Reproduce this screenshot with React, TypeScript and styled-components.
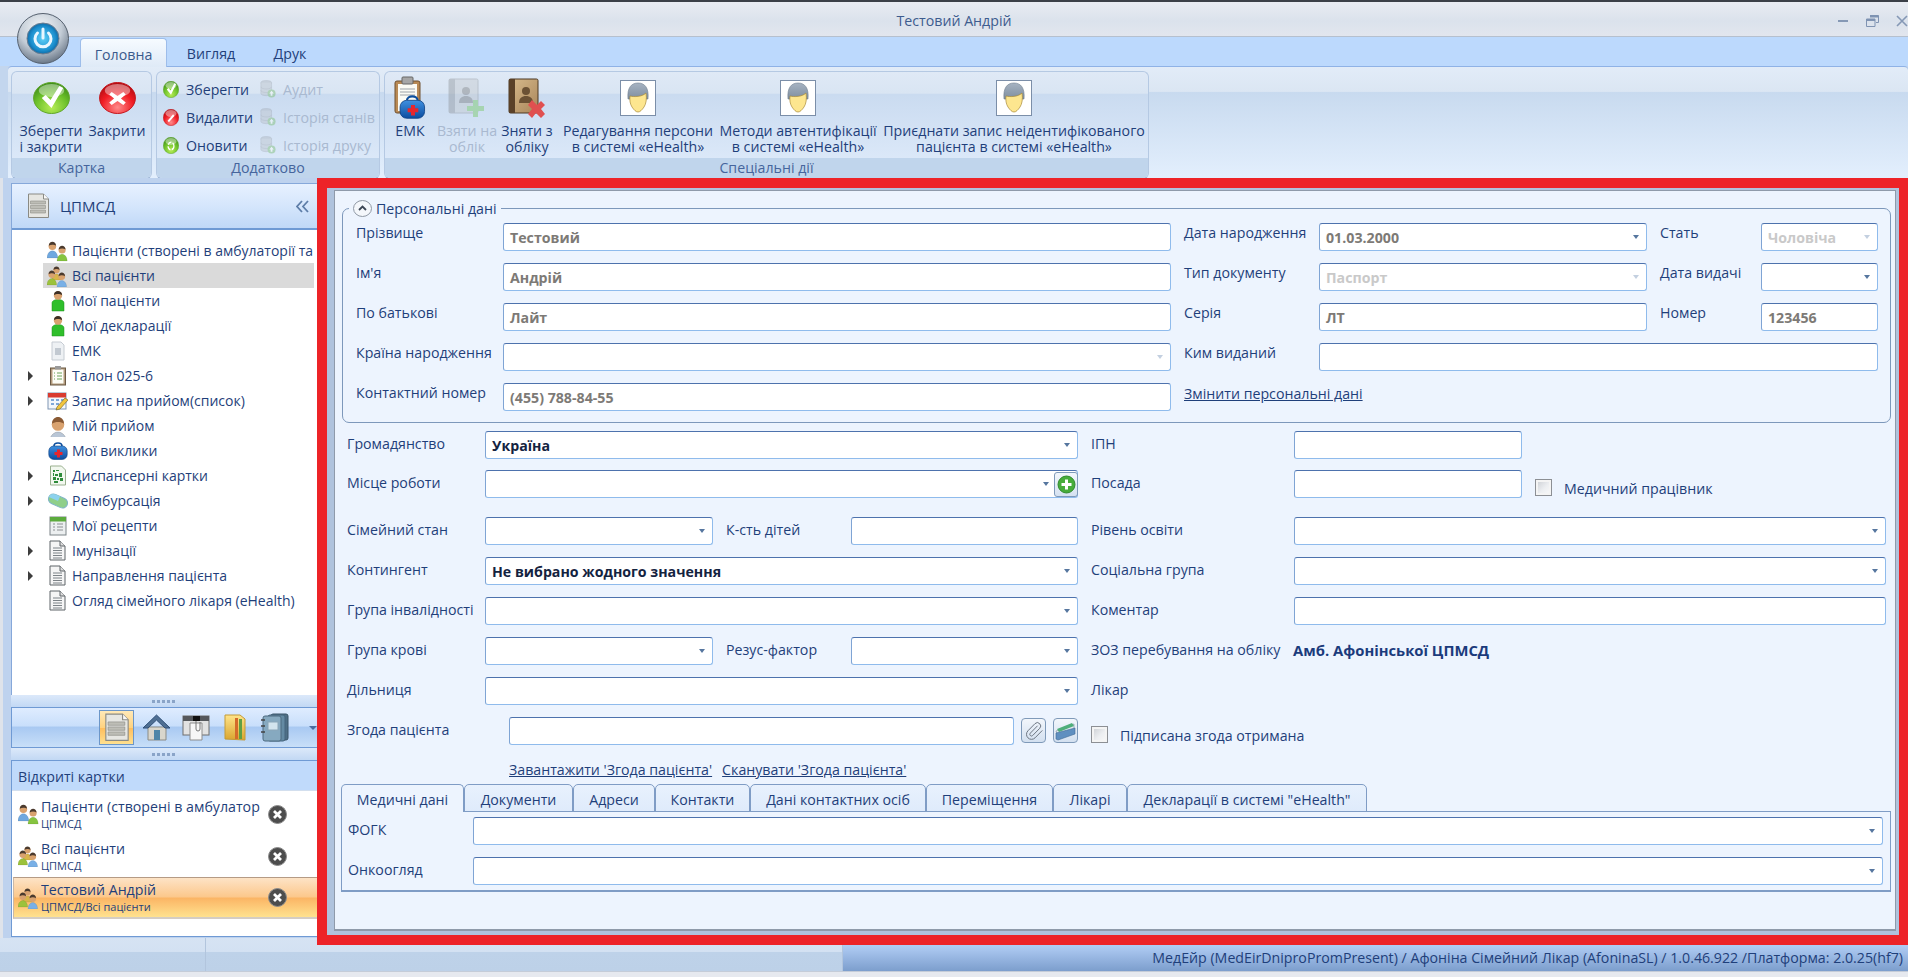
import React from "react";
import styled, { createGlobalStyle } from "styled-components";
import { Paperclip } from "lucide-react";

const FONT = `"Open Sans", "Noto Sans", sans-serif`;
const NAVY = "#1f3f7a";
const TEXT_SIZE = "14.2px";

const GlobalStyle = createGlobalStyle`
  html, body {
    margin: 0;
    padding: 0;
    background: #c3d6ee;
  }
  body {
    font-family: ${FONT};
    font-size: ${TEXT_SIZE};
    color: ${NAVY};
    overflow: hidden;
  }
  * {
    box-sizing: border-box;
  }
`;

const Window = styled.div`
  width: 1908px;
  height: 977px;
  position: relative;
  overflow: hidden;
  display: flex;
  flex-direction: column;
  background: #c3d6ee;
`;

/* title bar */
const TitleBar = styled.div`
  height: 37px;
  flex: none;
  display: flex;
  align-items: center;
  justify-content: center;
  position: relative;
  padding-top: 2px;
  background: linear-gradient(180deg, #e9ecf2 0%, #dbe2ec 55%, #e2e6ee 100%);
  border-top: 2px solid #3c4048;
  border-bottom: 1px solid #b6c0ce;
  color: #3e5c8e;
`;

const WindowButtons = styled.div`
  position: absolute;
  right: 0;
  top: 13px;
  display: flex;
  align-items: center;
  gap: 17px;
`;

const Orb = styled.div`
  position: absolute;
  left: 17px;
  top: 13px;
  width: 52px;
  height: 51px;
  z-index: 3;
`;

/* ribbon */
const RibbonTabs = styled.div`
  height: 29px;
  flex: none;
  display: flex;
  align-items: flex-end;
  padding-left: 80px;
  background: #bcd9fd;
`;

const RibbonTab = styled.div<{ $active?: boolean; $w: number }>`
  width: ${(p) => p.$w}px;
  height: 28px;
  padding-top: 2px;
  display: flex;
  align-items: center;
  justify-content: center;
  border-radius: 4px 4px 0 0;
  color: ${(p) => (p.$active ? "#3a5a8c" : "#23407a")};
  ${(p) =>
    p.$active &&
    `background: linear-gradient(180deg, #f6fbff 0%, #dfeaf7 100%);
     border: 1px solid #9dbdea;
     border-bottom: none;
     margin-bottom: -1px;
     height: 29px;
     position: relative;
     z-index: 1;`}
`;

const RibbonBody = styled.div`
  height: 112px;
  flex: none;
  margin-left: 8px;
  padding: 4px 0 0 3px;
  display: flex;
  gap: 4px;
  border-top: 1px solid #8fb2e6;
  border-radius: 4px 4px 0 0;
  background: linear-gradient(
    180deg,
    #e2ecf8 0%,
    #dbe6f3 22%,
    #c8daef 23%,
    #e3effd 100%
  );
`;

const Group = styled.div<{ $w: number }>`
  width: ${(p) => p.$w}px;
  height: 108px;
  display: flex;
  flex-direction: column;
  border: 1px solid #b5c9e3;
  border-bottom-color: #9fb8d8;
  border-radius: 6px;
  overflow: hidden;
  background: linear-gradient(
    180deg,
    #dfe9f6 0%,
    #d9e5f3 20%,
    #cadbf0 21%,
    #e0ecfb 100%
  );
`;

const GroupBody = styled.div`
  flex: 1;
  display: flex;
  min-height: 0;
`;

const GroupFooter = styled.div`
  height: 20px;
  flex: none;
  padding-bottom: 2px;
  display: flex;
  align-items: center;
  justify-content: center;
  background: #c0d5ec;
  color: #46659d;
`;

const BigButton = styled.div<{ $w: number; $off?: boolean; $left?: boolean; $ml?: number }>`
  width: ${(p) => p.$w}px;
  margin-left: ${(p) => p.$ml ?? 0}px;
  flex: none;
  display: flex;
  flex-direction: column;
  align-items: center;
  color: ${(p) => (p.$off ? "#a9b9d0" : NAVY)};
  line-height: 16px;
  white-space: nowrap;
  text-align: ${(p) => (p.$left ? "left" : "center")};
`;

const BigIcon = styled.div`
  height: 51px;
  flex: none;
  display: flex;
  align-items: center;
  justify-content: center;
`;

const SmallGrid = styled.div`
  padding: 3px 0 0 6px;
  display: grid;
  grid-template-columns: 97px 1fr;
  grid-auto-rows: 28px;
`;

const SmallButton = styled.div<{ $off?: boolean }>`
  display: flex;
  align-items: center;
  gap: 7px;
  white-space: nowrap;
  color: ${(p) => (p.$off ? "#a9b9d0" : NAVY)};
`;

/* main row */
const MainRow = styled.div`
  height: 767px;
  flex: none;
  display: flex;
`;

const Sidebar = styled.div`
  width: 317px;
  flex: none;
  padding: 5px 0 8px 11px;
  display: flex;
  flex-direction: column;
  background: linear-gradient(90deg, #dfe3ea 0, #dfe3ea 3px, #bed2ee 3px);
`;

const NavPanel = styled.div`
  height: 512px;
  flex: none;
  display: flex;
  flex-direction: column;
  background: #fff;
  border: 1px solid #86a8da;
  border-right: none;
  border-bottom: none;
`;

const NavHeader = styled.div`
  height: 46px;
  flex: none;
  display: flex;
  align-items: center;
  padding: 0 8px 0 15px;
  gap: 10px;
  font-size: 15px;
  background: linear-gradient(180deg, #e7f1ff 0%, #d5e6fc 50%, #c0d8f7 100%);
  border-bottom: 2px solid #6f9ad4;
`;

const HeaderTitle = styled.span`
  flex: 1;
`;

const Tree = styled.div`
  padding-top: 8px;
  display: flex;
  flex-direction: column;
`;

const TreeRow = styled.div`
  height: 25px;
  display: flex;
  align-items: center;
`;

const ExpandSlot = styled.div`
  width: 31px;
  flex: none;
  display: flex;
  padding-left: 16px;
`;

const Expander = styled.div`
  width: 0;
  height: 0;
  border-left: 5px solid #3d3d3d;
  border-top: 5px solid transparent;
  border-bottom: 5px solid transparent;
`;

const TreeLabel = styled.div<{ $selected?: boolean }>`
  flex: 1;
  min-width: 0;
  height: 25px;
  margin-right: 3px;
  padding-left: 4px;
  display: flex;
  align-items: center;
  gap: 3px;
  white-space: nowrap;
  overflow: hidden;
  font-size: 14px;
  background: ${(p) => (p.$selected ? "#dadada" : "transparent")};
`;

const IconSlot = styled.div<{ $w: number }>`
  width: ${(p) => p.$w}px;
  flex: none;
  display: flex;
  align-items: center;
  justify-content: center;
`;

const Grip = styled.div`
  height: 12px;
  flex: none;
  display: flex;
  align-items: center;
  justify-content: center;
  background: linear-gradient(180deg, #dce9fa 0%, #c2d8f4 100%);

  &::before {
    content: "";
    width: 24px;
    height: 3px;
    background: repeating-linear-gradient(90deg, #8aa4c8 0 3px, transparent 3px 5px);
  }
`;

const SwitchBar = styled.div`
  height: 41px;
  flex: none;
  display: flex;
  align-items: center;
  padding-left: 87px;
  gap: 4.5px;
  border: 1px solid #6f9ad4;
  border-right: none;
  background: linear-gradient(180deg, #dfecff 0%, #c9dffb 45%, #a9c9f2 50%, #c8dff8 100%);
`;

const SwitchButton = styled.div<{ $active?: boolean }>`
  width: 35px;
  height: 35px;
  flex: none;
  display: flex;
  align-items: center;
  justify-content: center;
  ${(p) =>
    p.$active &&
    `border: 1px solid #6b96c9;
     background: linear-gradient(180deg, #ffe9b8 0%, #ffd27f 50%, #ffbd5c 51%, #ffe08f 100%);`}
`;

const MoreCaret = styled.div`
  margin-left: 12px;
  width: 0;
  height: 0;
  border-left: 4px solid transparent;
  border-right: 4px solid transparent;
  border-top: 4px solid #4a6c9f;
`;

const CardsPanel = styled.div`
  flex: 1;
  display: flex;
  flex-direction: column;
  background: #fff;
  border: 1px solid #6f9ad4;
  border-right: none;
`;

const CardsHeader = styled.div`
  height: 30px;
  flex: none;
  display: flex;
  align-items: center;
  padding: 2px 0 0 6px;
  background: #c0dafb;
  border-bottom: 1px solid #d3dfee;
`;

const CardsList = styled.div`
  padding-top: 2px;
  display: flex;
  flex-direction: column;
`;

const Card = styled.div<{ $active?: boolean }>`
  height: 42px;
  flex: none;
  display: flex;
  align-items: center;
  padding-left: 5px;
  ${(p) =>
    p.$active &&
    `background: linear-gradient(180deg, #fde3c6 0%, #fcc88c 48%, #fbb565 52%, #ffe28f 100%);
     border-top: 1px solid #b59b85;
     border-left: 1px solid #c9b8a8;
     border-bottom: 2px solid #d4cdc4;
     margin-left: 1px;
     padding-left: 3px;`}
`;

const CardText = styled.div`
  width: 227px;
  flex: none;
  overflow: hidden;
  white-space: nowrap;
`;

const CardTitle = styled.div`
  line-height: 19px;
`;

const CardSub = styled.div`
  font-size: 11px;
  line-height: 16px;
`;

/* workspace */
const Workspace = styled.div`
  flex: 1;
  min-width: 0;
  height: 767px;
  position: relative;
  z-index: 1;
  border: solid #ed2328;
  border-width: 10px 9px 10px 10px;
  padding: 2px 3px 4px 7px;
  background: #b0c3dd;
`;

const Sheet = styled.div`
  height: 100%;
  background: #edf4fe;
  border: 1px solid #8f9aaa;
  border-bottom: 2px solid #8f9aaa;
  padding-top: 7px;
`;

const Personal = styled.fieldset`
  margin: 0 4px 0 7px;
  padding: 5px 13px 11px 13px;
  min-width: 0;
  border: 1px solid #7d98bb;
  border-radius: 7px;
`;

const Legend = styled.legend`
  margin-left: -7px;
  padding: 0 4px;
  height: 20px;
  display: inline-flex;
  align-items: center;
  gap: 4px;
`;

const PersonalGrid = styled.div`
  display: grid;
  grid-template-columns: 134px 668px 122px 328px 88px 117px;
  column-gap: 13px;
  row-gap: 12px;
  grid-auto-rows: 28px;
`;

const FormGrid = styled.div`
  margin: 8px 0 0 12px;
  display: grid;
  grid-template-columns: 125px 228px 112px 227px 190px 228px 351px;
  column-gap: 13px;
  row-gap: 12px;
  grid-template-rows: 27px 35px repeat(6, 28px);
`;

const Label = styled.div`
  padding-top: 3px;
  line-height: 20px;
  white-space: nowrap;
`;

const PersonalLabel = styled(Label)`
  padding-top: 0;
`;

const Box = styled.div<{ $span?: number; $tone?: "muted" | "off" | "strong" }>`
  grid-column: span ${(p) => p.$span ?? 1};
  height: 28px;
  min-width: 0;
  display: flex;
  align-items: center;
  padding: 1px 6px 0;
  gap: 4px;
  background: #fff;
  border: 1px solid #8fbbec;
  border-top-color: #4d72ad;
  border-left-color: #7fa4d4;
  border-radius: 3px;
  font-weight: 700;
  white-space: nowrap;
  color: ${(p) =>
    p.$tone === "muted"
      ? "#7d7a76"
      : p.$tone === "off"
      ? "#c9c9c9"
      : p.$tone === "strong"
      ? "#14233f"
      : NAVY};
`;

const BoxText = styled.span`
  flex: 1;
  min-width: 0;
`;

const Caret = styled.span<{ $off?: boolean }>`
  flex: none;
  margin: -1px 1px 0 0;
  width: 0;
  height: 0;
  border-left: 3.5px solid transparent;
  border-right: 3.5px solid transparent;
  border-top: 4px solid ${(p) => (p.$off ? "#c3d0e0" : "#56769f")};
`;

const AddButton = styled.div`
  flex: none;
  width: 24px;
  height: 25px;
  margin: -1px -7px 0 0;
  display: flex;
  align-items: center;
  justify-content: center;
  background: linear-gradient(180deg, #f2f6fb, #d6e2f1);
  border: 1px solid #7f9ab9;
  border-radius: 3px;
`;

const ChangeLink = styled.a`
  padding-top: 1px;
  line-height: 20px;
  color: ${NAVY};
  text-decoration: underline;
  white-space: nowrap;
`;

const CheckCell = styled.div<{ $span?: number }>`
  grid-column: span ${(p) => p.$span ?? 1};
  padding-top: 9px;
  display: flex;
  align-items: flex-start;
  gap: 12px;
  line-height: 20px;
  white-space: nowrap;
`;

const CheckBox = styled.span`
  width: 17px;
  height: 17px;
  flex: none;
  border: 1px solid #8c8f94;
  background: linear-gradient(135deg, #c9ccd1 0%, #eceef1 55%, #fafafa 100%);
  box-shadow: inset 0 0 0 2px #f4f4f4;
`;

const Strong = styled.div<{ $span?: number }>`
  grid-column: span ${(p) => p.$span ?? 1};
  margin-left: -1px;
  padding-top: 3px;
  line-height: 20px;
  font-size: 14.8px;
  font-weight: 700;
  white-space: nowrap;
  color: #1b3b7c;
`;

const Filler = styled.div<{ $span?: number }>`
  grid-column: span ${(p) => p.$span ?? 1};
`;

const ConsentCell = styled.div`
  grid-column: span 3;
  padding-left: 24px;
  display: flex;
  gap: 7px;
`;

const ConsentBox = styled(Box)`
  flex: 1;
`;

const ToolButton = styled.div`
  width: 25px;
  height: 25px;
  flex: none;
  margin-top: 1px;
  display: flex;
  align-items: center;
  justify-content: center;
  color: #6d7682;
  background: linear-gradient(180deg, #f2f6fb, #d3e0f0);
  border: 1px solid #7f9ab9;
  border-radius: 4px;
`;

const LinkRow = styled.div`
  height: 20px;
  margin: 14px 0 0 174px;
  display: flex;
  gap: 10px;
`;

const FileLink = styled.a`
  line-height: 22px;
  color: ${NAVY};
  text-decoration: underline;
  white-space: nowrap;
`;

const TabStrip = styled.div`
  margin: 5px 0 0 6px;
  height: 27px;
  display: flex;
  position: relative;
  z-index: 1;
`;

const Tab = styled.div<{ $w: number; $active?: boolean }>`
  width: ${(p) => p.$w}px;
  height: 28px;
  flex: none;
  padding-top: 2px;
  display: flex;
  align-items: center;
  justify-content: center;
  white-space: nowrap;
  border: 1px solid #7f9cc5;
  border-bottom: ${(p) => (p.$active ? "none" : "1px solid #7f9cc5")};
  border-radius: 5px 5px 0 0;
  background: ${(p) =>
    p.$active ? "#edf4fe" : "linear-gradient(180deg, #e8f1fd, #dfebfb)"};
`;

const TabPanel = styled.div`
  margin: 0 4px 0 6px;
  padding: 5px 7px 5px 6px;
  height: 81px;
  display: grid;
  grid-template-columns: 125px 1fr;
  row-gap: 12px;
  grid-auto-rows: 28px;
  border: 1px solid #7f9cc5;
  border-bottom-width: 2px;
`;

/* status bar */
const StatusBar = styled.div`
  height: 33px;
  flex: none;
  margin-top: -7px;
  display: flex;
  background: linear-gradient(180deg, #d6e3f3 0%, #d3e1f2 42%, #bed2e9 43%, #bdd1e8 100%);
`;

const StatusCell = styled.div<{ $w: number }>`
  width: ${(p) => p.$w}px;
  flex: none;
  border-right: 1px solid #b2c5dd;
`;

const StatusInfo = styled.div`
  flex: 1;
  display: flex;
  align-items: flex-end;
  justify-content: flex-end;
  padding: 0 5px 4px 0;
  white-space: nowrap;
  background: linear-gradient(180deg, #bcd8fd 0%, #a8c5ee 35%, #7c9ecd 100%);
`;

const BottomEdge = styled.div`
  flex: 1;
  background: #e6e9ef;
  border-top: 1px solid #c4ccd8;
`;

/* drawn icons */
const Defs = styled.svg`
  position: absolute;
  width: 0;
  height: 0;
`;

const SharedDefs = () => (
  <Defs aria-hidden="true">
    <defs>
      <radialGradient id="ballGreen" cx="50%" cy="80%" r="75%">
        <stop offset="0" stopColor="#b6ec56" />
        <stop offset="0.6" stopColor="#6cc02a" />
        <stop offset="1" stopColor="#3f8f1a" />
      </radialGradient>
      <radialGradient id="ballRed" cx="50%" cy="80%" r="75%">
        <stop offset="0" stopColor="#ff8a8a" />
        <stop offset="0.6" stopColor="#f01c24" />
        <stop offset="1" stopColor="#b40c12" />
      </radialGradient>
      <radialGradient id="orbRim" cx="45%" cy="30%" r="75%">
        <stop offset="0" stopColor="#f5f7f9" />
        <stop offset="0.55" stopColor="#c3ccd6" />
        <stop offset="1" stopColor="#5d6b7c" />
      </radialGradient>
      <radialGradient id="orbCore" cx="50%" cy="50%" r="55%">
        <stop offset="0" stopColor="#5fd0f8" />
        <stop offset="0.7" stopColor="#1c8fce" />
        <stop offset="1" stopColor="#0a5c96" />
      </radialGradient>
      <linearGradient id="hair" x1="0" y1="0" x2="0" y2="1">
        <stop offset="0" stopColor="#a6b3c2" />
        <stop offset="1" stopColor="#7f8e9f" />
      </linearGradient>
      <linearGradient id="bag" x1="0" y1="0" x2="0" y2="1">
        <stop offset="0" stopColor="#3f90e0" />
        <stop offset="1" stopColor="#0c4da0" />
      </linearGradient>
      <linearGradient id="book" x1="0" y1="0" x2="1" y2="1">
        <stop offset="0" stopColor="#d8bb8d" />
        <stop offset="1" stopColor="#a9865a" />
      </linearGradient>
      <linearGradient id="folder" x1="0" y1="0" x2="0" y2="1">
        <stop offset="0" stopColor="#ffe48a" />
        <stop offset="1" stopColor="#d9a52f" />
      </linearGradient>
    </defs>
  </Defs>
);

const PowerOrb = () => (
  <svg width="52" height="51" viewBox="0 0 52 51">
    <ellipse cx="26" cy="25.5" rx="25.5" ry="25" fill="url(#orbRim)" stroke="#55606e" />
    <ellipse cx="26" cy="25.5" rx="16" ry="15.5" fill="url(#orbCore)" stroke="#6f7e90" />
    <path d="M20.5 20a8 8 0 1 0 11 0" fill="none" stroke="#eaf7ff" strokeWidth="3" strokeLinecap="round" />
    <path d="M26 16v9" stroke="#eaf7ff" strokeWidth="3" strokeLinecap="round" />
  </svg>
);

type Mark = "check" | "cross" | "slash" | "recycle";

const Ball = ({ w, h, color, mark }: { w: number; h: number; color: "Green" | "Red"; mark: Mark }) => (
  <svg width={w} height={h} viewBox="0 0 38 32" preserveAspectRatio="none">
    <ellipse cx="19" cy="16" rx="18.4" ry="15.5" fill={`url(#ball${color})`} stroke={color === "Green" ? "#5fa52a" : "#c4161c"} />
    <ellipse cx="19" cy="8.5" rx="13" ry="6.5" fill="#fff" opacity="0.42" />
    {mark === "check" && <path d="M9 16l4-3 5 5 9-14 4 2-12 20z" fill="#fff" />}
    {mark === "cross" && <path d="M13 10l6 4 6-4 2.5 2.5-5 4 5 4-2.5 2.5-6-4-6 4-2.5-2.5 5-4-5-4z" fill="#fff" />}
    {mark === "slash" && <path d="M11 22l13-12 3 3-13 12z" fill="#fff" />}
    {mark === "recycle" && <circle cx="19" cy="17" r="7" fill="none" stroke="#fff" strokeWidth="3" strokeDasharray="9 3" />}
  </svg>
);

const StackIcon = () => (
  <svg width="16" height="20" viewBox="0 0 18 22" opacity="0.45">
    <ellipse cx="7" cy="4" rx="6" ry="2.5" fill="#aeb6bf" stroke="#8d959f" strokeWidth="0.6" />
    <path d="M1 4v12c0 1.4 2.7 2.5 6 2.5s6-1.1 6-2.5V4" fill="#bcc3cb" stroke="#8d959f" strokeWidth="0.6" />
    <path d="M1 8.500c0 1.4 2.7 2.5 6 2.500s6-1.100 6-2.500M1 12.500c0 1.400 2.700 2.500 6 2.500s6-1.100 6-2.500" fill="none" stroke="#8d959f" strokeWidth="0.6" />
    <circle cx="13" cy="16" r="4.5" fill="#7bbd72" />
    <path d="M13 13l2.500 3h-1.500v2.500h-2V16h-1.500z" fill="#fff" />
  </svg>
);

const Man = ({ x, y, s, body, skin = "#d9a26f", hair = "#4a3a2e" }: { x: number; y: number; s: number; body: string; skin?: string; hair?: string }) => (
  <g transform={`translate(${x} ${y}) scale(${s})`}>
    <path d="M0 20c0-5 3-8 6-8s6 3 6 8z" fill={body} stroke="#00000033" strokeWidth="0.5" />
    <circle cx="6" cy="7" r="4.2" fill={skin} />
    <path d="M2 6.500C2 3.500 4 2 6 2s4 1.500 4 4.500C8 5 4 5 2 6.500z" fill={hair} />
  </g>
);

const PairIcon = () => (
  <svg width="22" height="22" viewBox="0 0 22 22">
    <Man x={0} y={0} s={0.9} body="#6fa8e0" />
    <Man x={10} y={4} s={0.85} body="#86c440" />
  </svg>
);

const GroupIcon = () => (
  <svg width="22" height="22" viewBox="0 0 22 22">
    <Man x={5} y={0} s={0.75} body="#d9b54a" />
    <Man x={0} y={4} s={0.8} body="#9cc23c" />
    <Man x={10} y={6} s={0.8} body="#79b0e6" />
  </svg>
);

const GreenManIcon = () => (
  <svg width="20" height="22" viewBox="0 0 20 22">
    <path d="M4 21V13c0-2 2.500-3.500 6-3.500s6 1.500 6 3.500v8z" fill="#2fbf2b" stroke="#1f8f1d" strokeWidth="0.5" />
    <circle cx="10" cy="5.500" r="4.200" fill="#d9a26f" />
    <path d="M6 5C6 2 8 1 10 1s4 1 4 4C12 3.500 8 3.500 6 5z" fill="#3d2f25" />
  </svg>
);

const PlainManIcon = () => (
  <svg width="20" height="22" viewBox="0 0 20 22">
    <Man x={1} y={-1} s={1.5} body="#b9c6d6" hair="#8a5a34" />
  </svg>
);

const DocIcon = () => (
  <svg width="20" height="21" viewBox="0 0 20 21">
    <path d="M2 1h10l5 5v14H2z" fill="#f5f5f5" stroke="#5f6468" />
    <path d="M12 1v5h5" fill="#dcdcdc" stroke="#5f6468" />
    <path d="M5 8h9M5 10.500h9M5 13h9M5 15.500h9M5 18h9" stroke="#7d8388" />
  </svg>
);

const CardDocIcon = () => (
  <svg width="16" height="20" viewBox="0 0 16 20">
    <path d="M2 1h9l3 3v15H2z" fill="#eef1f4" stroke="#c6ccd3" />
    <rect x="5" y="7" width="6" height="7" fill="#c2c9d1" />
  </svg>
);

const ClipboardIcon = () => (
  <svg width="18" height="21" viewBox="0 0 18 21">
    <rect x="1.5" y="3" width="15" height="17" fill="#b39a7c" stroke="#6b5a45" />
    <rect x="3.5" y="4.5" width="11" height="14" fill="#fdfdf6" />
    <rect x="6" y="1" width="6" height="3.5" fill="#9a9a9a" />
    <path d="M5 8h1M8 8h5M5 11h1M8 11h5M5 14h1M8 14h5" stroke="#6aa35a" />
  </svg>
);

const CalendarIcon = () => (
  <svg width="22" height="21" viewBox="0 0 22 21">
    <rect x="1" y="3" width="18" height="16" fill="#f4f7fb" stroke="#7f96b4" />
    <rect x="1" y="3" width="18" height="4.5" fill="#d93b30" />
    <path d="M4 10h3M9 10h3M14 10h3M4 14h3M9 14h3" stroke="#7fa7d8" strokeWidth="2" />
    <path d="M10 17l8-9 3 2-8 9-4 1z" fill="#f2c53d" stroke="#6a5a20" strokeWidth="0.6" />
  </svg>
);

const BagIcon = () => (
  <svg width="20" height="18" viewBox="0 0 20 18">
    <path d="M6 4c0-4 8-4 8 0" fill="none" stroke="#0d4f9e" strokeWidth="1.6" />
    <rect x="0.8" y="4" width="18.4" height="13.5" rx="5" fill="url(#bag)" stroke="#0b3f82" strokeWidth="0.6" />
    <path d="M9 7.500h3V10h2.500v3H12v2.500H9V13H6.500v-3H9z" fill="#e8262c" />
  </svg>
);

const BarcodeIcon = () => (
  <svg width="18" height="21" viewBox="0 0 18 21">
    <path d="M1.500 1h11l4 4v15h-15z" fill="#f2f8ef" stroke="#9ab08f" />
    <path d="M4 5h2v2H4zM7 5h3v1H7zM4 8h1v3H4zM6 9h3v2H6zM10 8h3v4h-3zM4 12h3v3H4zM8 13h2v2H8zM11 13h3v3h-3zM5 16h4v2H5z" fill="#2e8b3a" />
  </svg>
);

const PillIcon = () => (
  <svg width="22" height="20" viewBox="0 0 22 20">
    <g transform="rotate(24 11 10)">
      <rect x="1" y="5" width="20" height="10" rx="5" fill="#8fcf8a" stroke="#7fb4c8" />
      <path d="M1 10a5 5 0 0 1 5-5h5v5z" fill="#8cd2ee" />
    </g>
  </svg>
);

const RecipeIcon = () => (
  <svg width="18" height="21" viewBox="0 0 18 21">
    <rect x="1" y="2" width="16" height="18" fill="#eceff0" stroke="#7d8488" />
    <rect x="1" y="2" width="16" height="4.5" fill="#5cab3d" />
    <path d="M4 9h2M8 9h6M4 12h2M8 12h6M4 15h2M8 15h6" stroke="#8b8f92" />
  </svg>
);

const HeaderDoc = ({ w = 23, h = 26 }: { w?: number; h?: number }) => (
  <svg width={w} height={h} viewBox="0 0 23 26">
    <path d="M1.500 1h15l5 5v18.500h-20z" fill="#e6e6e2" stroke="#8a8a84" />
    <path d="M16.500 1v5h5" fill="#fafafa" stroke="#8a8a84" />
    <path d="M3.500 8h15v3h-15zM3.500 12.500h15v3h-15zM3.500 17h15v3h-15z" fill="#bdbdb6" stroke="#8f8f88" strokeWidth="0.6" />
  </svg>
);

const HouseIcon = () => (
  <svg width="29" height="29" viewBox="0 0 29 29">
    <path d="M6 14h18v13H6z" fill="#d9d6cc" stroke="#8b8b85" />
    <path d="M14.500 2L1 15h5l8.500-8 8.500 8h5z" fill="#4f6f93" stroke="#2f4f78" />
    <rect x="12" y="17" width="6" height="10" fill="#4f86a8" />
  </svg>
);

const BinderIcon = () => (
  <svg width="28" height="29" viewBox="0 0 28 29">
    <rect x="1" y="3" width="26" height="19" fill="#e2e2e2" stroke="#6f6f6f" />
    <rect x="1" y="3" width="26" height="5" fill="#55585c" />
    <rect x="11" y="3" width="7" height="5" fill="#111" />
    <path d="M8 10h12v17H8z" fill="#f7f7f7" stroke="#8d8d8d" />
    <path d="M14 8v8a2 2 0 0 0 4 0V9" fill="none" stroke="#777" />
  </svg>
);

const FolderIcon = () => (
  <svg width="24" height="29" viewBox="0 0 24 29">
    <path d="M2 2h15l5 4v21l-20-1z" fill="url(#folder)" stroke="#c39a36" />
    <rect x="12" y="5" width="3" height="21" fill="#d46b2a" />
    <rect x="16" y="6" width="3" height="20" fill="#5f9f45" />
  </svg>
);

const NotebookIcon = () => (
  <svg width="29" height="29" viewBox="0 0 29 29">
    <rect x="11" y="1" width="17" height="26" rx="2" fill="#4e6f86" stroke="#3a5568" />
    <rect x="8" y="2" width="17" height="26" rx="2" fill="#648aa3" stroke="#45657c" />
    <rect x="3" y="3" width="18" height="25" rx="2" fill="#86a9c0" stroke="#4d6b80" />
    <rect x="8" y="9" width="10" height="8" fill="#d3e4ee" stroke="#8aa6b8" />
    <path d="M1 7h4M1 13h4M1 19h4" stroke="#444" strokeWidth="1.5" />
  </svg>
);

const CloseDisc = () => (
  <svg width="19" height="19" viewBox="0 0 19 19">
    <circle cx="9.5" cy="9.5" r="9" fill="#4d4d4d" stroke="#8a8a8a" />
    <path d="M6 6l7 7M13 6l-7 7" stroke="#fff" strokeWidth="2.8" />
  </svg>
);

const Chevrons = () => (
  <svg width="13" height="13" viewBox="0 0 13 13">
    <path d="M6 1L1 6.500 6 12M12 1L7 6.500 12 12" fill="none" stroke="#5d7da8" strokeWidth="1.8" />
  </svg>
);

const CollapseDisc = () => (
  <svg width="19" height="17" viewBox="0 0 19 17">
    <ellipse cx="9.5" cy="8.5" rx="9" ry="8" fill="#f4f7fb" stroke="#8f98a4" />
    <path d="M6 10l3.500-3.500L13 10" fill="none" stroke="#3c4654" strokeWidth="1.8" />
  </svg>
);

const PlusBall = () => (
  <svg width="19" height="19" viewBox="0 0 19 19">
    <circle cx="9.5" cy="9.5" r="8.5" fill="#47ac3a" stroke="#2f8a2c" />
    <path d="M8 4.500h3V8h3.500v3H11v3.500H8V11H4.500V8H8z" fill="#fff" />
  </svg>
);

const ScannerIcon = () => (
  <svg width="21" height="20" viewBox="0 0 21 20">
    <path d="M1 10l18-7v6L3 16z" fill="#e2e8ef" stroke="#7b8a9a" strokeWidth="0.6" />
    <path d="M2 8l15-6 2 3-15 6z" fill="#4fae7a" />
    <path d="M1 12l19-5v6L3 19 1 18z" fill="#5f8fc0" stroke="#3f6a96" strokeWidth="0.6" />
  </svg>
);

const ClipboardBag = () => (
  <svg width="32" height="43" viewBox="0 0 32 43">
    <rect x="1" y="5" width="25" height="32" rx="2" fill="#b98a55" stroke="#6f5030" />
    <rect x="4" y="8" width="19" height="27" fill="#fbfbf4" />
    <rect x="8" y="1" width="11" height="7" rx="1" fill="#a6a6a6" stroke="#666" />
    <path d="M6 13h15M6 16h15M6 19h15" stroke="#9da3a8" />
    <g transform="translate(5 19) scale(1.33)">
      <path d="M6 4c0-4 8-4 8 0" fill="none" stroke="#0d4f9e" strokeWidth="1.6" />
      <rect x="0.8" y="4" width="18.4" height="13.5" rx="5" fill="url(#bag)" stroke="#0b3f82" strokeWidth="0.6" />
      <path d="M9 7.500h3V10h2.500v3H12v2.500H9V13H6.500v-3H9z" fill="#e8262c" />
    </g>
  </svg>
);

const BookIcon = ({ faded, mark }: { faded?: boolean; mark: "plus" | "cross" }) => (
  <svg width="38" height="40" viewBox="0 0 38 40" opacity={faded ? 0.42 : 1}>
    <rect x="1" y="1" width="29" height="34" rx="1.5" fill={faded ? "#c5c9cd" : "url(#book)"} stroke={faded ? "#8f9499" : "#4d3822"} />
    <rect x="1" y="1" width="6" height="34" fill={faded ? "#8d9297" : "#5a4128"} />
    <circle cx="18" cy="13" r="4" fill={faded ? "#777" : "#6b5134"} />
    <path d="M11 25c0-5 3-7 7-7s7 2 7 7z" fill={faded ? "#777" : "#6b5134"} />
    {mark === "plus" ? (
      <path d="M25 22h5v6h6v5h-6v6h-5v-6h-6v-5h6z" fill="#71c75a" />
    ) : (
      <path d="M24 22l5 5 4-4 4 4-4 4 4 5-4 4-5-5-4 5-4-4 4-5-4-4z" fill="#e05050" />
    )}
  </svg>
);

const FaceFrame = styled.div`
  width: 36px;
  height: 36px;
  background: #fff;
  border: 1px solid #7b8ea8;
  display: flex;
  align-items: center;
  justify-content: center;
`;

const Face = () => (
  <FaceFrame>
    <svg width="22" height="31" viewBox="0 0 22 31">
      <path d="M1 17C0 6 4 1 11 1s11 5 10 16z" fill="url(#hair)" stroke="#6f7d8d" strokeWidth="0.6" />
      <path d="M3 14c4 1 12 1 16-3 1 6 0 11-2 14-2 3-4 5-6 5s-4-2-6-5c-2-3-2.500-7-2-11z" fill="#fde68f" stroke="#a88a3a" strokeWidth="0.7" />
    </svg>
  </FaceFrame>
);

const MinimizeGlyph = () => (
  <svg width="11" height="4" viewBox="0 0 11 4">
    <rect x="0" y="1" width="10" height="2" fill="#8598b5" />
  </svg>
);

const RestoreGlyph = () => (
  <svg width="13" height="12" viewBox="0 0 13 12">
    <path d="M4 .5h8.500v7H10M.5 4h8.500v7.500H.5z" fill="none" stroke="#7f93b2" />
    <path d="M4 .5h8.500V2.500H4zM.5 4H9v2H.5z" fill="#7f93b2" />
  </svg>
);

const CloseGlyph = () => (
  <svg width="12" height="12" viewBox="0 0 12 12">
    <path d="M1 1l10 10M11 1L1 11" stroke="#8598b5" strokeWidth="1.6" />
  </svg>
);

const treeItems: { label: string; icon: React.ReactNode; expand?: boolean; selected?: boolean }[] = [
  { label: "Пацієнти (створені в амбулаторії та", icon: <PairIcon /> },
  { label: "Всі пацієнти", icon: <GroupIcon />, selected: true },
  { label: "Мої пацієнти", icon: <GreenManIcon /> },
  { label: "Мої декларації", icon: <GreenManIcon /> },
  { label: "ЕМК", icon: <CardDocIcon /> },
  { label: "Талон 025-6", icon: <ClipboardIcon />, expand: true },
  { label: "Запис на прийом(список)", icon: <CalendarIcon />, expand: true },
  { label: "Мій прийом", icon: <PlainManIcon /> },
  { label: "Мої виклики", icon: <BagIcon /> },
  { label: "Диспансерні картки", icon: <BarcodeIcon />, expand: true },
  { label: "Реімбурсація", icon: <PillIcon />, expand: true },
  { label: "Мої рецепти", icon: <RecipeIcon /> },
  { label: "Імунізації", icon: <DocIcon />, expand: true },
  { label: "Направлення пацієнта", icon: <DocIcon />, expand: true },
  { label: "Огляд сімейного лікаря (eHealth)", icon: <DocIcon /> },
];

const openCards = [
  { title: "Пацієнти (створені в амбулатор", sub: "ЦПМСД", icon: <PairIcon /> },
  { title: "Всі пацієнти", sub: "ЦПМСД", icon: <GroupIcon /> },
  { title: "Тестовий Андрій", sub: "ЦПМСД/Всі пацієнти", icon: <GroupIcon />, active: true },
];

const tabs = [
  { label: "Медичні дані", w: 123, active: true },
  { label: "Документи", w: 109 },
  { label: "Адреси", w: 82 },
  { label: "Контакти", w: 95 },
  { label: "Дані контактних осіб", w: 176 },
  { label: "Переміщення", w: 127 },
  { label: "Лікарі", w: 74 },
  { label: 'Декларації в системі "eHealth"', w: 240 },
];

const Combo = ({ span, tone, text, off }: { span?: number; tone?: "muted" | "off" | "strong"; text?: string; off?: boolean }) => (
  <Box $span={span} $tone={tone}>
    <BoxText>{text}</BoxText>
    <Caret $off={off} />
  </Box>
);

export default function App() {
  return (
    <Window>
      <GlobalStyle />
      <SharedDefs />
      <TitleBar>
        Тестовий Андрій
        <WindowButtons>
          <MinimizeGlyph />
          <RestoreGlyph />
          <CloseGlyph />
        </WindowButtons>
      </TitleBar>
      <Orb>
        <PowerOrb />
      </Orb>

      <RibbonTabs>
        <RibbonTab $w={87} $active>
          Головна
        </RibbonTab>
        <RibbonTab $w={88}>Вигляд</RibbonTab>
        <RibbonTab $w={70}>Друк</RibbonTab>
      </RibbonTabs>

      <RibbonBody>
        <Group $w={141}>
          <GroupBody>
            <BigButton $w={62} $ml={8} $left>
              <BigIcon>
                <Ball w={37} h={32} color="Green" mark="check" />
              </BigIcon>
              Зберегти
              <br />і закрити
            </BigButton>
            <BigButton $w={58} $ml={6}>
              <BigIcon>
                <Ball w={37} h={32} color="Red" mark="cross" />
              </BigIcon>
              Закрити
            </BigButton>
          </GroupBody>
          <GroupFooter>Картка</GroupFooter>
        </Group>

        <Group $w={224}>
          <GroupBody>
            <SmallGrid>
              <SmallButton>
                <Ball w={16} h={17} color="Green" mark="check" />
                Зберегти
              </SmallButton>
              <SmallButton $off>
                <StackIcon />
                Аудит
              </SmallButton>
              <SmallButton>
                <Ball w={16} h={17} color="Red" mark="slash" />
                Видалити
              </SmallButton>
              <SmallButton $off>
                <StackIcon />
                Історія станів
              </SmallButton>
              <SmallButton>
                <Ball w={16} h={17} color="Green" mark="recycle" />
                Оновити
              </SmallButton>
              <SmallButton $off>
                <StackIcon />
                Історія друку
              </SmallButton>
            </SmallGrid>
          </GroupBody>
          <GroupFooter>Додатково</GroupFooter>
        </Group>

        <Group $w={765}>
          <GroupBody>
            <BigButton $w={44} $ml={3}>
              <BigIcon>
                <ClipboardBag />
              </BigIcon>
              ЕМК
            </BigButton>
            <BigButton $w={70} $off>
              <BigIcon>
                <BookIcon faded mark="plus" />
              </BigIcon>
              Взяти на
              <br />
              облік
            </BigButton>
            <BigButton $w={50}>
              <BigIcon>
                <BookIcon mark="cross" />
              </BigIcon>
              Зняти з
              <br />
              обліку
            </BigButton>
            <BigButton $w={172}>
              <BigIcon>
                <Face />
              </BigIcon>
              Редагування персони
              <br />в системі «eHealth»
            </BigButton>
            <BigButton $w={148}>
              <BigIcon>
                <Face />
              </BigIcon>
              Методи автентифікації
              <br />в системі «eHealth»
            </BigButton>
            <BigButton $w={270} $ml={7}>
              <BigIcon>
                <Face />
              </BigIcon>
              Приєднати запис неідентифікованого
              <br />
              пацієнта в системі «eHealth»
            </BigButton>
          </GroupBody>
          <GroupFooter>Спеціальні дії</GroupFooter>
        </Group>
      </RibbonBody>

      <MainRow>
        <Sidebar>
          <NavPanel>
            <NavHeader>
              <HeaderDoc />
              <HeaderTitle>ЦПМСД</HeaderTitle>
              <Chevrons />
            </NavHeader>
            <Tree>
              {treeItems.map((item) => (
                <TreeRow key={item.label}>
                  <ExpandSlot>{item.expand && <Expander />}</ExpandSlot>
                  <TreeLabel $selected={item.selected}>
                    <IconSlot $w={22}>{item.icon}</IconSlot>
                    {item.label}
                  </TreeLabel>
                </TreeRow>
              ))}
            </Tree>
          </NavPanel>
          <Grip />
          <SwitchBar>
            <SwitchButton $active>
              <HeaderDoc w={26} h={29} />
            </SwitchButton>
            <SwitchButton>
              <HouseIcon />
            </SwitchButton>
            <SwitchButton>
              <BinderIcon />
            </SwitchButton>
            <SwitchButton>
              <FolderIcon />
            </SwitchButton>
            <SwitchButton>
              <NotebookIcon />
            </SwitchButton>
            <MoreCaret />
          </SwitchBar>
          <Grip />
          <CardsPanel>
            <CardsHeader>Відкриті картки</CardsHeader>
            <CardsList>
              {openCards.map((card) => (
                <Card key={card.title} $active={card.active}>
                  <IconSlot $w={24}>{card.icon}</IconSlot>
                  <CardText>
                    <CardTitle>{card.title}</CardTitle>
                    <CardSub>{card.sub}</CardSub>
                  </CardText>
                  <CloseDisc />
                </Card>
              ))}
            </CardsList>
          </CardsPanel>
        </Sidebar>

        <Workspace>
          <Sheet>
            <Personal>
              <Legend>
                <CollapseDisc />
                Персональні дані
              </Legend>
              <PersonalGrid>
                <PersonalLabel>Прізвище</PersonalLabel>
                <Box $tone="muted">Тестовий</Box>
                <PersonalLabel>Дата народження</PersonalLabel>
                <Combo tone="muted" text="01.03.2000" />
                <PersonalLabel>Стать</PersonalLabel>
                <Combo tone="off" text="Чоловіча" off />

                <PersonalLabel>Ім'я</PersonalLabel>
                <Box $tone="muted">Андрій</Box>
                <PersonalLabel>Тип документу</PersonalLabel>
                <Combo tone="off" text="Паспорт" off />
                <PersonalLabel>Дата видачі</PersonalLabel>
                <Combo />

                <PersonalLabel>По батькові</PersonalLabel>
                <Box $tone="muted">Лайт</Box>
                <PersonalLabel>Серія</PersonalLabel>
                <Box $tone="muted">ЛТ</Box>
                <PersonalLabel>Номер</PersonalLabel>
                <Box $tone="muted">123456</Box>

                <PersonalLabel>Країна народження</PersonalLabel>
                <Combo off />
                <PersonalLabel>Ким виданий</PersonalLabel>
                <Box $span={3} />

                <PersonalLabel>Контактний номер</PersonalLabel>
                <Box $tone="muted">(455) 788-84-55</Box>
                <ChangeLink>Змінити персональні дані</ChangeLink>
              </PersonalGrid>
            </Personal>

            <FormGrid>
              <Label>Громадянство</Label>
              <Combo span={3} tone="strong" text="Україна" />
              <Label>ІПН</Label>
              <Box />
              <Filler />

              <Label>Місце роботи</Label>
              <Box $span={3}>
                <BoxText />
                <Caret />
                <AddButton>
                  <PlusBall />
                </AddButton>
              </Box>
              <Label>Посада</Label>
              <Box />
              <CheckCell>
                <CheckBox />
                Медичний працівник
              </CheckCell>

              <Label>Сімейний стан</Label>
              <Combo />
              <Label>К-сть дітей</Label>
              <Box />
              <Label>Рівень освіти</Label>
              <Combo span={2} />

              <Label>Контингент</Label>
              <Combo span={3} tone="strong" text="Не вибрано жодного значення" />
              <Label>Соціальна група</Label>
              <Combo span={2} />

              <Label>Група інвалідності</Label>
              <Combo span={3} />
              <Label>Коментар</Label>
              <Box $span={2} />

              <Label>Група крові</Label>
              <Combo />
              <Label>Резус-фактор</Label>
              <Combo />
              <Label>ЗОЗ перебування на обліку</Label>
              <Strong $span={2}>Амб. Афонінської ЦПМСД</Strong>

              <Label>Дільниця</Label>
              <Combo span={3} />
              <Label>Лікар</Label>
              <Filler $span={2} />

              <Label>Згода пацієнта</Label>
              <ConsentCell>
                <ConsentBox />
                <ToolButton>
                  <Paperclip size={20} strokeWidth={1.2} />
                </ToolButton>
                <ToolButton>
                  <ScannerIcon />
                </ToolButton>
              </ConsentCell>
              <CheckCell $span={3}>
                <CheckBox />
                Підписана згода отримана
              </CheckCell>
            </FormGrid>

            <LinkRow>
              <FileLink>Завантажити 'Згода пацієнта'</FileLink>
              <FileLink>Сканувати 'Згода пацієнта'</FileLink>
            </LinkRow>

            <TabStrip>
              {tabs.map((tab) => (
                <Tab key={tab.label} $w={tab.w} $active={tab.active}>
                  {tab.label}
                </Tab>
              ))}
            </TabStrip>
            <TabPanel>
              <Label>ФОГК</Label>
              <Combo />
              <Label>Онкоогляд</Label>
              <Combo />
            </TabPanel>
          </Sheet>
        </Workspace>
      </MainRow>

      <StatusBar>
        <StatusCell $w={206} />
        <StatusCell $w={637} />
        <StatusInfo>
          МедЕйр (MedEirDniproPromPresent) / Афоніна Сімейний Лікар (AfoninaSL) / 1.0.46.922 /Платформа: 2.0.25(hf7)
        </StatusInfo>
      </StatusBar>
      <BottomEdge />
    </Window>
  );
}
